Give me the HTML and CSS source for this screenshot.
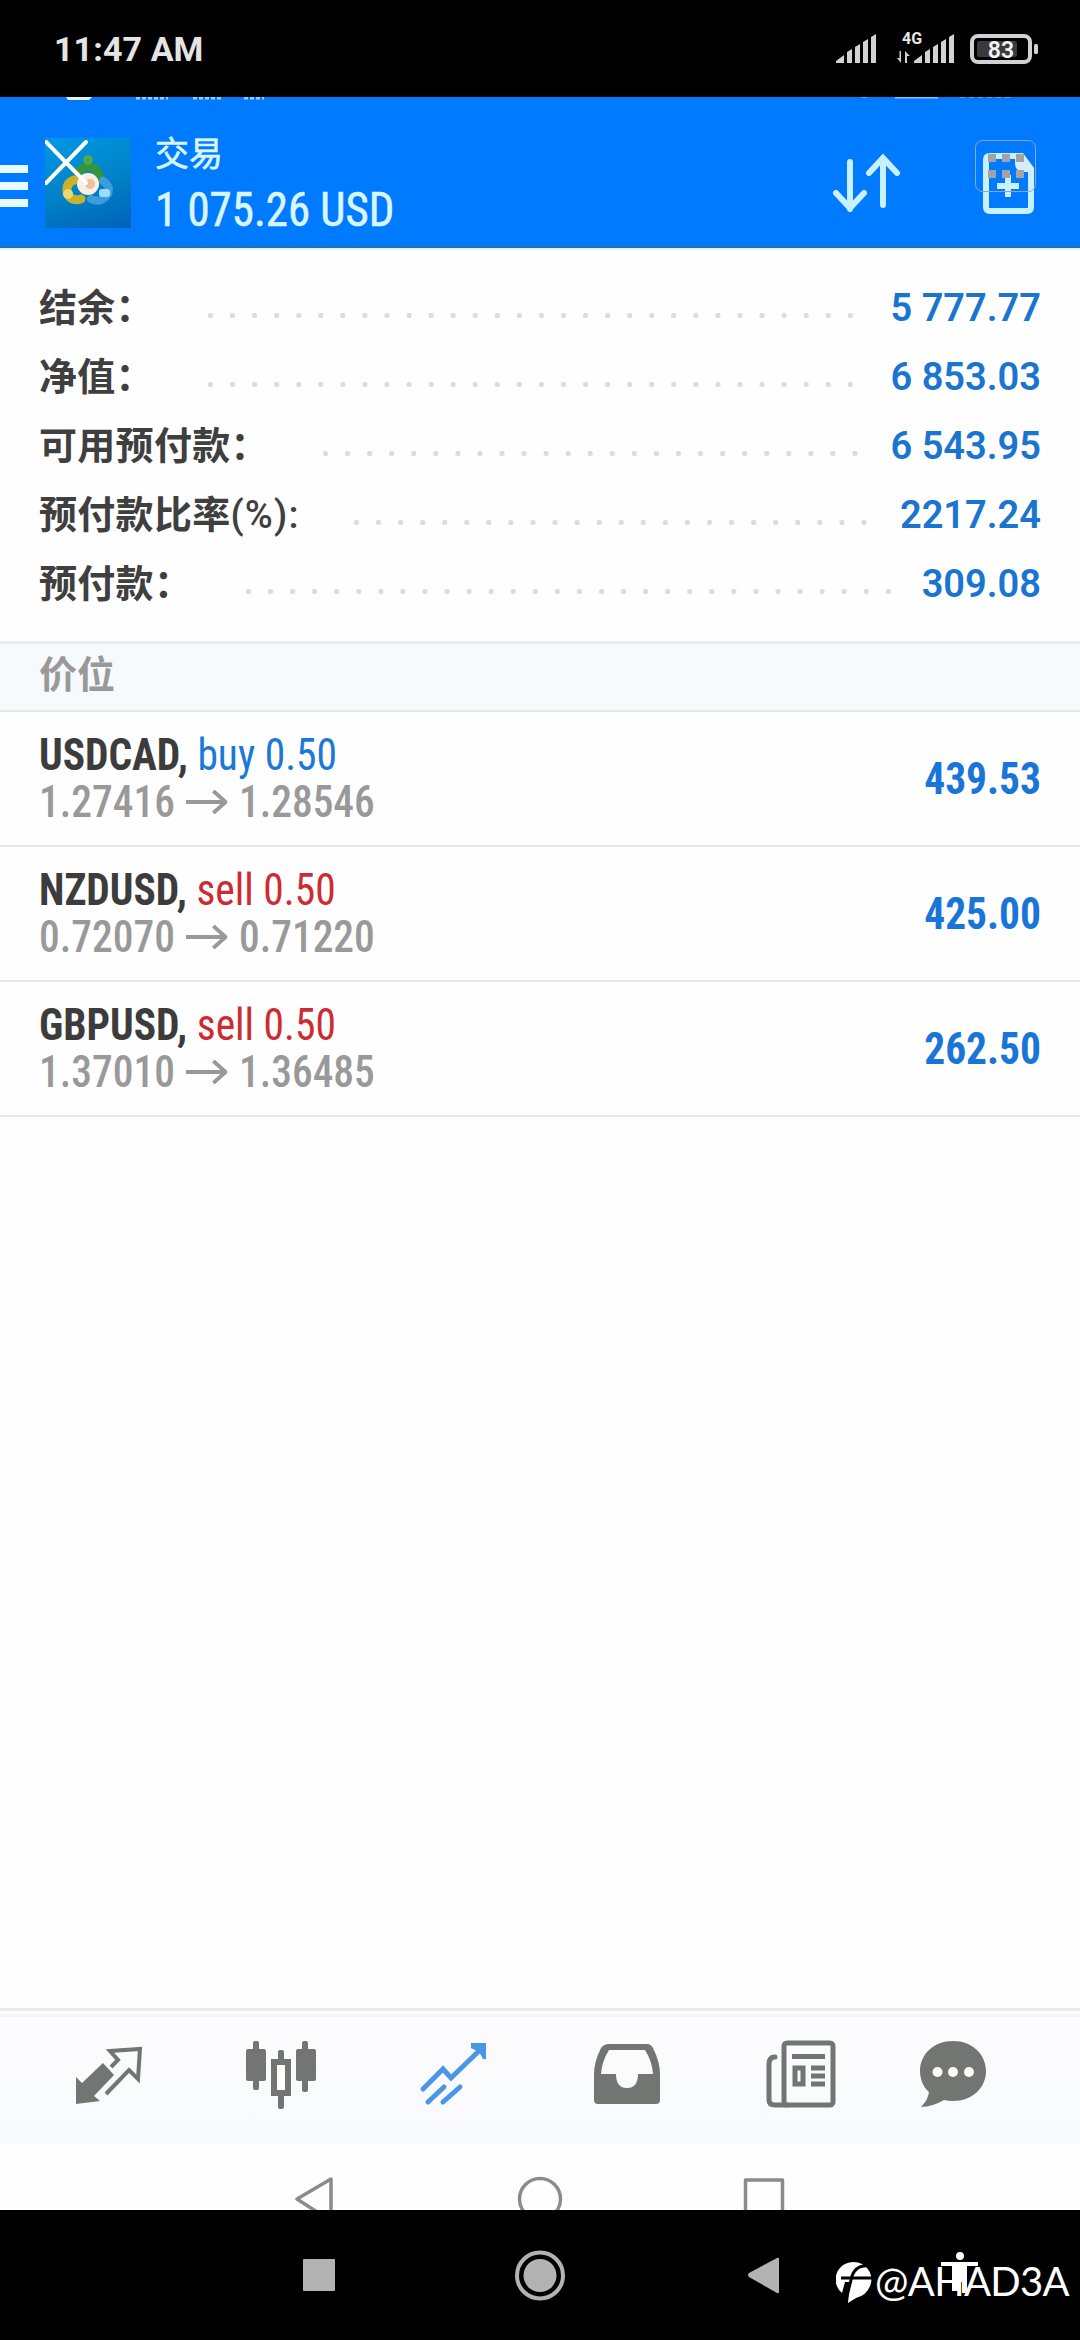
FILE: index.html
```html
<!DOCTYPE html>
<html lang="zh-CN">
<head>
  <meta charset="UTF-8">
  <meta name="viewport" content="width=device-width, initial-scale=1.0">
  <title>交易</title>
  <link rel="stylesheet" href="styles.css">
</head>
<body>
  <div class="status-bar">
    <span class="clock">11:47 AM</span>
    <svg class="status-icons" width="210" height="40" viewBox="832 28 210 40">
      <g fill="#d2d2d2">
        <path d="M836 62v-2l8-6v8zM847 62V51l5-3v14zM855 62V46l5-3v19zM863 62V41l5-3v24zM871 62V36l5-3v29z"/>
        <path d="M914 62v-2l8-6v8zM925 62V51l5-3v14zM933 62V46l5-3v19zM941 62V41l5-3v24zM949 62V36l5-3v29z"/>
        <path d="M901 50v12l-4-5h2.500v-7zM905 62V50l5 5h-3v7z"/>
        <rect x="1034" y="43" width="4" height="10" rx="1.500"/>
      </g>
      <rect x="972" y="35" width="58" height="26" rx="6" fill="none" stroke="#d2d2d2" stroke-width="4"/>
      <rect x="977" y="40" width="40" height="16" rx="2" fill="#3a3a3a"/>
      <text class="net" x="902" y="43">4G</text>
      <text class="battery" x="1001" y="56.500">83</text>
    </svg>
  </div>

  <header class="header">
    <!-- bottom edge of the shared screen's own status bar -->
    <svg class="cut-status" width="1080" height="4" viewBox="0 0 1080 4">
      <path d="M66 0h26l-3 3H68z" fill="#dff4ff"/>
      <path d="M136 1h32M193 1h30M244 1h20" stroke="#8fd0ff" stroke-width="3" stroke-dasharray="4 2"/>
      <path d="M895 0h43" stroke="#7fc4ff" stroke-width="3"/>
      <path d="M960 0h50M862 0h6" stroke="#4aa3ff" stroke-width="2" stroke-dasharray="5 4"/>
    </svg>
    <svg class="menu" width="28" height="44" viewBox="0 0 28 44">
      <path d="M0 5h28M0 22h28M0 39h28" stroke="#e6faff" stroke-width="8"/>
    </svg>
    <div class="app-logo">
      <svg width="86" height="90" viewBox="45 138 86 90">
        <path d="M77 181q0-14 11-14t12 13" fill="none" stroke="#35953a" stroke-width="8" stroke-linecap="round"/>
        <circle cx="88" cy="160" r="5" fill="#4fa850"/>
        <path d="M74 180q-8 3-7 12 3 10 14 7" fill="none" stroke="#c9b12c" stroke-width="9" stroke-linecap="round"/>
        <circle cx="68" cy="194" r="5" fill="#e6d873"/>
        <path d="M103 181q8 5 5 13-7 10-17 5" fill="none" stroke="#3d9ddc" stroke-width="8" stroke-linecap="round"/>
        <rect x="99" y="189" width="11" height="8" rx="3" fill="#9fdcfb"/>
        <circle cx="88" cy="184" r="11" fill="#fbeee2"/>
        <circle cx="90" cy="184" r="5" fill="#eebf98"/>
        <path d="M46 142l40 41M86 142l-40 41" stroke="#fff" stroke-width="4" stroke-linecap="round"/>
      </svg>
    </div>
    <div class="heading">
      <div class="title">交易</div>
      <div class="profit">1 075.26 USD</div>
    </div>
    <svg class="sort" width="70" height="60" viewBox="831 153 70 60">
      <path d="M849 162v47M835 193l14 15 14-15M882 205v-47M868 173l14-15 14 15" fill="none" stroke="#c9f0ff" stroke-width="6" stroke-linecap="round"/>
    </svg>
    <svg class="new-order" width="64" height="78" viewBox="974 139 64 78">
      <path d="M1020 156h-30q-4 0-4 4v47q0 4 4 4h37q4 0 4-4v-39" fill="none" stroke="#c9f0ff" stroke-width="6"/>
      <path d="M1015 153h8l11 15v4h-11q-8-1-8-9z" fill="#d7edff"/>
      <path d="M997 186h22M1008 175v22" stroke="#c9f0ff" stroke-width="6"/>
      <rect x="975.500" y="140.500" width="60" height="51" rx="7" fill="none" stroke="#8aa9c4"/>
      <path d="M988 158h8m6 0h8m6 0h8M988 174h8m6 0h8m6 0h8" stroke="#a3a3a3" stroke-width="8"/>
    </svg>
  </header>

  <section class="account">
    <div class="line"><span>结余：</span><i></i><b>5 777.77</b></div>
    <div class="line"><span>净值：</span><i></i><b>6 853.03</b></div>
    <div class="line"><span>可用预付款：</span><i></i><b>6 543.95</b></div>
    <div class="line"><span>预付款比率<em>(%):</em></span><i></i><b>2217.24</b></div>
    <div class="line"><span>预付款：</span><i></i><b>309.08</b></div>
  </section>

  <h2 class="section-title">价位</h2>

  <main class="positions">
    <div class="position">
      <div class="deal">
        <div class="symbol"><b>USDCAD,</b> <span class="buy">buy 0.50</span></div>
        <div class="prices"><span>1.27416</span><svg width="44" height="24" viewBox="0 0 44 24"><path d="M0 12h42M29 1l13 11-13 11"/></svg><span>1.28546</span></div>
      </div>
      <div class="result">439.53</div>
    </div>
    <div class="position">
      <div class="deal">
        <div class="symbol"><b>NZDUSD,</b> <span class="sell">sell 0.50</span></div>
        <div class="prices"><span>0.72070</span><svg width="44" height="24" viewBox="0 0 44 24"><path d="M0 12h42M29 1l13 11-13 11"/></svg><span>0.71220</span></div>
      </div>
      <div class="result">425.00</div>
    </div>
    <div class="position">
      <div class="deal">
        <div class="symbol"><b>GBPUSD,</b> <span class="sell">sell 0.50</span></div>
        <div class="prices"><span>1.37010</span><svg width="44" height="24" viewBox="0 0 44 24"><path d="M0 12h42M29 1l13 11-13 11"/></svg><span>1.36485</span></div>
      </div>
      <div class="result">262.50</div>
    </div>
  </main>

  <nav class="tabs">
    <svg width="72" height="72" viewBox="72 2038 72 72">
      <path d="M76 2077l6 6 21-20 11 12-20 21 6 5-24 3z" fill="#737573"/>
      <path d="M111 2067l7-7-8-9 30-2-2 30-9-9-23 24" fill="none" stroke="#737573" stroke-width="4"/>
    </svg>
    <svg width="72" height="72" viewBox="245 2038 72 72">
      <g fill="#737573">
        <rect x="246" y="2049" width="20" height="32" rx="2"/><rect x="253" y="2041" width="6" height="49" rx="2"/>
        <rect x="296" y="2049" width="20" height="32" rx="2"/><rect x="302" y="2041" width="6" height="51" rx="2"/>
        <rect x="278" y="2050" width="6" height="12" rx="2"/><rect x="278" y="2093" width="6" height="16" rx="2"/>
      </g>
      <rect x="274" y="2062" width="14" height="31" fill="#fff" stroke="#737573" stroke-width="6"/>
    </svg>
    <svg width="72" height="72" viewBox="417 2038 72 72">
      <g fill="none" stroke="#4a96e6" stroke-width="5" stroke-linecap="round">
        <path d="M423 2089l20-20 8 9 32-31M428 2102l16-15M443 2102l17-15"/>
      </g>
      <path d="M471 2043h15v16h-3l-4-7-8-4z" fill="#4a96e6"/>
    </svg>
    <svg width="72" height="72" viewBox="591 2038 72 72">
      <path fill="#737573" fill-rule="evenodd" d="M609 2044h38q4 0 6 4 7 14 7 26v26q0 4-4 4h-58q-4 0-4-4v-26q0-12 7-26 3-4 8-4zM609 2050q-7 11-8 24h15q0 14 11 14t11-14h15q-1-13-8-24z"/>
    </svg>
    <svg width="76" height="72" viewBox="763 2038 76 72">
      <g fill="none" stroke="#737573" stroke-width="5">
        <rect x="784" y="2043" width="49" height="62" rx="3"/>
        <path d="M775 2057q-6 0-6 7v36q0 5 6 5h12" stroke-linecap="round"/>
        <path d="M792 2056.500h33M811 2068h14M811 2076h14M811 2084h14"/>
        <rect x="795" y="2068" width="8" height="16"/>
      </g>
    </svg>
    <svg width="72" height="72" viewBox="917 2038 72 72">
      <path d="M953 2041c19 0 33 13 33 30s-14 30-33 30q-5 0-9-1-12 7-23 7 7-7 8-15c-6-5-9-13-9-21 0-17 14-30 33-30z" fill="#737573"/>
      <g fill="#fff"><circle cx="937.500" cy="2072" r="5"/><circle cx="953" cy="2072" r="5"/><circle cx="969" cy="2072" r="5"/></g>
    </svg>
  </nav>

  <!-- navigation row of the shared screen, cut by the device bar -->
  <div class="inner-nav">
    <svg width="500" height="36" viewBox="290 2174 500 36">
      <g fill="none" stroke="#8b8b8b" stroke-width="3.500" stroke-linejoin="round">
        <path d="M297 2199l34-20v42z"/>
        <circle cx="540" cy="2199" r="20.500"/>
        <path d="M745.500 2212v-32h37v32"/>
      </g>
    </svg>
  </div>

  <footer class="device-nav">
    <svg width="480" height="52" viewBox="302 2250 480 52">
      <g fill="#b3b3b3">
        <rect x="303" y="2259" width="32" height="32" rx="1"/>
        <circle cx="540" cy="2275.500" r="16.500"/>
        <path d="M749 2273l28-15q2-1 2 1v33q0 2-2 1l-28-16q-2-2 0-4z"/>
      </g>
      <circle cx="540" cy="2275.500" r="23" fill="none" stroke="#b3b3b3" stroke-width="4"/>
    </svg>
    <div class="watermark">
      <svg width="36" height="44" viewBox="835 2262 36 44">
        <path d="M853 2263a17.500 17.500 0 0 1 17 21q-3 12-15 15l-8 5 2-21h-5l-3 11a17.500 17.500 0 0 1 12-31z" fill="#fff"/>
        <path d="M869 2267q-16-2-19 14l-5 20M840 2279h31" fill="none" stroke="#000" stroke-width="3"/>
      </svg>
      <span>@AHAD3A</span>
    </div>
    <svg class="person" width="38" height="42" viewBox="941 2251 38 42">
      <g fill="#fff">
        <circle cx="960" cy="2256" r="4"/>
        <path d="M941 2262h37v4h-11v27h-5v-11h-4v9h-6v-25h-11z"/>
      </g>
    </svg>
  </footer>
</body>
</html>
```
FILE: styles.css
```css
* { box-sizing: border-box; }
body { margin: 0; width: 1080px; height: 2340px; display: flex; flex-direction: column; background: #fefefe; overflow: hidden; font-family: Roboto, "Noto Sans CJK SC", sans-serif; }
svg { display: block; flex: none; }

.status-bar { height: 97px; background: #000; display: flex; justify-content: space-between; align-items: center; padding: 0 38px 0 54px; }
.clock { color: #e4e4e4; font-size: 34px; font-weight: 700; letter-spacing: 0.1px; }
.net { fill: #e6e6e6; font-size: 16px; font-weight: 700; }
.battery { fill: #f2f2f2; font-size: 23px; font-weight: 600; text-anchor: middle; }

.header { position: relative; height: 153px; background: #007aff; border-bottom: 2px solid #d5faff; box-shadow: inset 0 -2px #2a6cb0; display: flex; align-items: flex-start; padding-top: 41px; }
.cut-status { position: absolute; left: 0; top: 0; }
.menu { margin-top: 26px; }
.app-logo { width: 86px; height: 90px; margin-left: 17px; background: linear-gradient(160deg, #0098e6, #0083c8 50%, #0062b8); }
.heading { margin: -9px 0 0 24px; color: #d9f6ff; width: 300px; }
.title { font-size: 34px; line-height: 50px; -webkit-text-stroke: 0.6px #d9f6ff; }
.profit { font-family: "Roboto Condensed", Roboto, sans-serif; font-stretch: 75%; font-size: 48px; line-height: 56px; margin-top: 3px; white-space: nowrap; transform: scaleX(0.935); transform-origin: left; -webkit-text-stroke: 0.6px #d9f6ff; }
.sort { margin: 15px 72px 0 auto; }
.new-order { margin: 1px 42px 0 0; }

.account { height: 391px; padding: 24px 39px 0; }
.line { height: 69px; display: flex; align-items: center; color: #3f3f3f; font-size: 38px; font-weight: 700; line-height: 69px; }
.line span { letter-spacing: 0.3px; }
.line em { font-style: normal; font-weight: 500; letter-spacing: 1.2px; }
.line i { flex: 1; height: 5px; margin: 14px 26px 0 54px; background: radial-gradient(circle at 2.5px 2.5px, #dcdcdc 2.4px, transparent 3px) 0 0 / 22.07px 5px repeat-x; }
.line b { color: #1a75d0; font-weight: 600; }

.section-title { margin: 0; height: 71px; padding-left: 39px; background: #f7fafd; border-top: 3px solid #ebebeb; border-bottom: 2px solid #e6e9ea; color: #999; font-size: 38px; font-weight: 700; line-height: 62px; }

.positions { flex: 1; font-family: "Roboto Condensed", Roboto, sans-serif; font-stretch: 75%; font-size: 44px; }
.position { height: 135px; padding: 0 39px; border-bottom: 2px solid #e8e8e8; display: flex; justify-content: space-between; align-items: center; }
.deal { transform: scaleX(0.942); transform-origin: left; }
.symbol { color: #3c3c3c; line-height: 47px; white-space: nowrap; }
.buy { color: #1a78d8; }
.sell { color: #cc2b32; }
.prices { display: flex; align-items: center; gap: 12px; color: #999; font-weight: 500; line-height: 47px; }
.prices path { fill: none; stroke: #999; stroke-width: 4; }
.result { color: #1a75d8; font-weight: 700; transform: scaleX(0.942); transform-origin: right; }

.tabs { height: 135px; border-top: 3px solid #ece9ea; background: linear-gradient(#fefefe 3px, #f5f3f4 3px 6px, #fcfbfd 6px, #f8fafd); display: flex; padding: 27px 0 0 72px; }
.tabs svg:nth-child(2) { margin-left: 101px; }
.tabs svg:nth-child(3) { margin-left: 100px; }
.tabs svg:nth-child(4) { margin-left: 102px; }
.tabs svg:nth-child(5) { margin-left: 100px; }
.tabs svg:nth-child(6) { margin-left: 78px; }

.inner-nav { height: 67px; padding: 31px 0 0 290px; overflow: hidden; }

.device-nav { position: relative; height: 130px; background: #000; display: flex; align-items: flex-start; padding: 40px 0 0 302px; }
.watermark { display: flex; align-items: center; margin: 9px 0 0 54px; height: 48px; color: #fff; font-family: Lato, sans-serif; font-size: 40px; letter-spacing: -0.7px; }
.watermark span { margin: -5px 0 0 3px; }
.person { position: absolute; left: 941px; top: 41px; }
```
